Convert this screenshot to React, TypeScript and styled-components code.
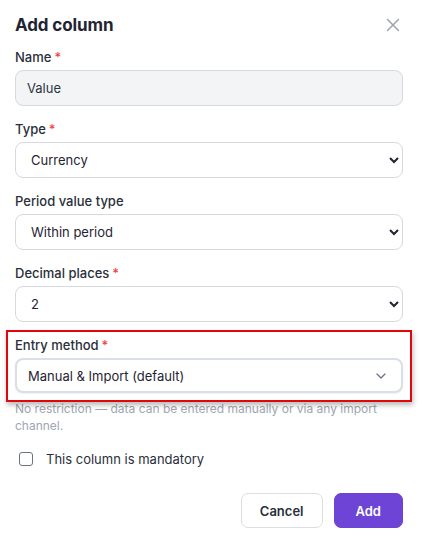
import React from "react";
import styled, { createGlobalStyle } from "styled-components";

const Global = createGlobalStyle`
  html, body { margin: 0; padding: 0; background: #ffffff; }
  body { font-family: Inter, "Noto Sans", sans-serif; color: #1f2937; }
  * { box-sizing: border-box; }
`;

const Dialog = styled.div`
  width: 421px;
  min-height: 541px;
  padding: 13px 18px 13px 15px;
  background: #ffffff;
  display: flex;
  flex-direction: column;
`;

const Header = styled.div`
  display: flex;
  align-items: center;
  justify-content: space-between;
  height: 24px;
  margin-bottom: 11px;
`;

const Title = styled.h2`
  margin: 0;
  font-size: 17px;
  font-weight: 700;
  color: #1f2433;
  letter-spacing: -0.1px;
`;

const CloseButton = styled.button`
  border: 0;
  background: none;
  padding: 0;
  width: 16px;
  height: 16px;
  display: flex;
  align-items: center;
  justify-content: center;
  color: #9aa3b0;
  margin-right: 2px;
  cursor: pointer;
`;

const Field = styled.div<{ $highlight?: boolean }>`
  position: relative;
  display: flex;
  flex-direction: column;
  gap: 4px;
  margin-bottom: ${(p) => (p.$highlight ? "0" : "14px")};
  ${(p) =>
    p.$highlight
      ? `
    &::after {
      content: "";
      position: absolute;
      left: -9px;
      right: -9px;
      top: -6px;
      bottom: -9px;
      border: 2px solid #e0070b;
      box-shadow: 1px 3px 5px rgba(0, 0, 0, 0.28);
      pointer-events: none;
    }
  `
      : ""}
`;

const Label = styled.label`
  font-size: 13px;
  line-height: 18px;
  font-weight: 500;
  color: #2a2f3a;
`;

const Required = styled.span`
  color: #ef4444;
  margin-left: 3px;
`;

const TextInput = styled.input`
  height: 36px;
  width: 100%;
  border: 1px solid #d5d9e0;
  border-radius: 8px;
  background: #f3f4f6;
  padding: 0 11px;
  font-family: Inter, "Noto Sans", sans-serif;
  font-size: 13px;
  color: #2f3542;
  outline: none;
`;

const NativeSelect = styled.select`
  height: 36px;
  width: 100%;
  border: 1px solid #d5d9e0;
  border-radius: 8px;
  background: #ffffff;
  padding: 0 6px 0 11px;
  font-family: Inter, "Noto Sans", sans-serif;
  font-size: 13px;
  color: #1f2433;
  outline: none;
`;

const CustomSelect = styled.div`
  height: 35px;
  width: 100%;
  border: 2px solid #dadee6;
  border-radius: 8px;
  background: #ffffff;
  box-shadow: 0 1px 2px rgba(15, 23, 42, 0.06);
  padding: 0 15px 0 11px;
  display: flex;
  align-items: center;
  justify-content: space-between;
  font-size: 13px;
  color: #1f2433;
`;

const Helper = styled.p`
  margin: 7px 0 0;
  font-size: 12px;
  line-height: 17px;
  color: #a0a6b1;
  padding-right: 8px;
`;

const CheckRow = styled.label`
  display: flex;
  align-items: center;
  gap: 13px;
  margin: 17px 0 0 4px;
  font-size: 13px;
  color: #2a2f3a;
`;

const CheckBox = styled.span`
  width: 14px;
  height: 14px;
  border: 1px solid #6b7280;
  border-radius: 3px;
  background: #fff;
`;

const Footer = styled.div`
  display: flex;
  justify-content: flex-end;
  gap: 11px;
  margin-top: 26px;
`;

const Button = styled.button<{ $primary?: boolean }>`
  height: 35px;
  padding: 0 ${(p) => (p.$primary ? "21px" : "18px")};
  border-radius: 7px;
  font-family: Inter, "Noto Sans", sans-serif;
  font-size: 13px;
  font-weight: 600;
  border: 1px solid ${(p) => (p.$primary ? "#6d44d6" : "#d9dde4")};
  background: ${(p) => (p.$primary ? "#6d44d6" : "#ffffff")};
  color: ${(p) => (p.$primary ? "#ffffff" : "#2a2f3a")};
  cursor: pointer;
`;

export default function App() {
  return (
    <>
      <Global />
      <Dialog>
        <Header>
          <Title>Add column</Title>
          <CloseButton aria-label="Close">
            <svg width="14" height="14" viewBox="0 0 14 14" fill="none">
              <path d="M1.5 1.5L12.5 12.5M12.5 1.5L1.5 12.5" stroke="currentColor" strokeWidth="1.5" strokeLinecap="round" />
            </svg>
          </CloseButton>
        </Header>

        <Field>
          <Label>
            Name<Required>*</Required>
          </Label>
          <TextInput defaultValue="Value" />
        </Field>

        <Field>
          <Label>
            Type<Required>*</Required>
          </Label>
          <NativeSelect defaultValue="Currency">
            <option>Currency</option>
            <option>Number</option>
            <option>Text</option>
          </NativeSelect>
        </Field>

        <Field>
          <Label>Period value type</Label>
          <NativeSelect defaultValue="Within period">
            <option>Within period</option>
            <option>End of period</option>
          </NativeSelect>
        </Field>

        <Field>
          <Label>
            Decimal places<Required>*</Required>
          </Label>
          <NativeSelect defaultValue="2">
            <option>0</option>
            <option>1</option>
            <option>2</option>
            <option>3</option>
          </NativeSelect>
        </Field>

        <Field $highlight>
          <Label>
            Entry method<Required>*</Required>
          </Label>
          <CustomSelect>
            <span>Manual &amp; Import (default)</span>
            <svg width="10" height="6" viewBox="0 0 10 6" fill="none">
              <path d="M1 1L5 5L9 1" stroke="#6b7280" strokeWidth="1.3" strokeLinecap="round" strokeLinejoin="round" />
            </svg>
          </CustomSelect>
        </Field>
        <Helper>No restriction — data can be entered manually or via any import channel.</Helper>

        <CheckRow>
          <CheckBox />
          This column is mandatory
        </CheckRow>

        <Footer>
          <Button>Cancel</Button>
          <Button $primary>Add</Button>
        </Footer>
      </Dialog>
    </>
  );
}
